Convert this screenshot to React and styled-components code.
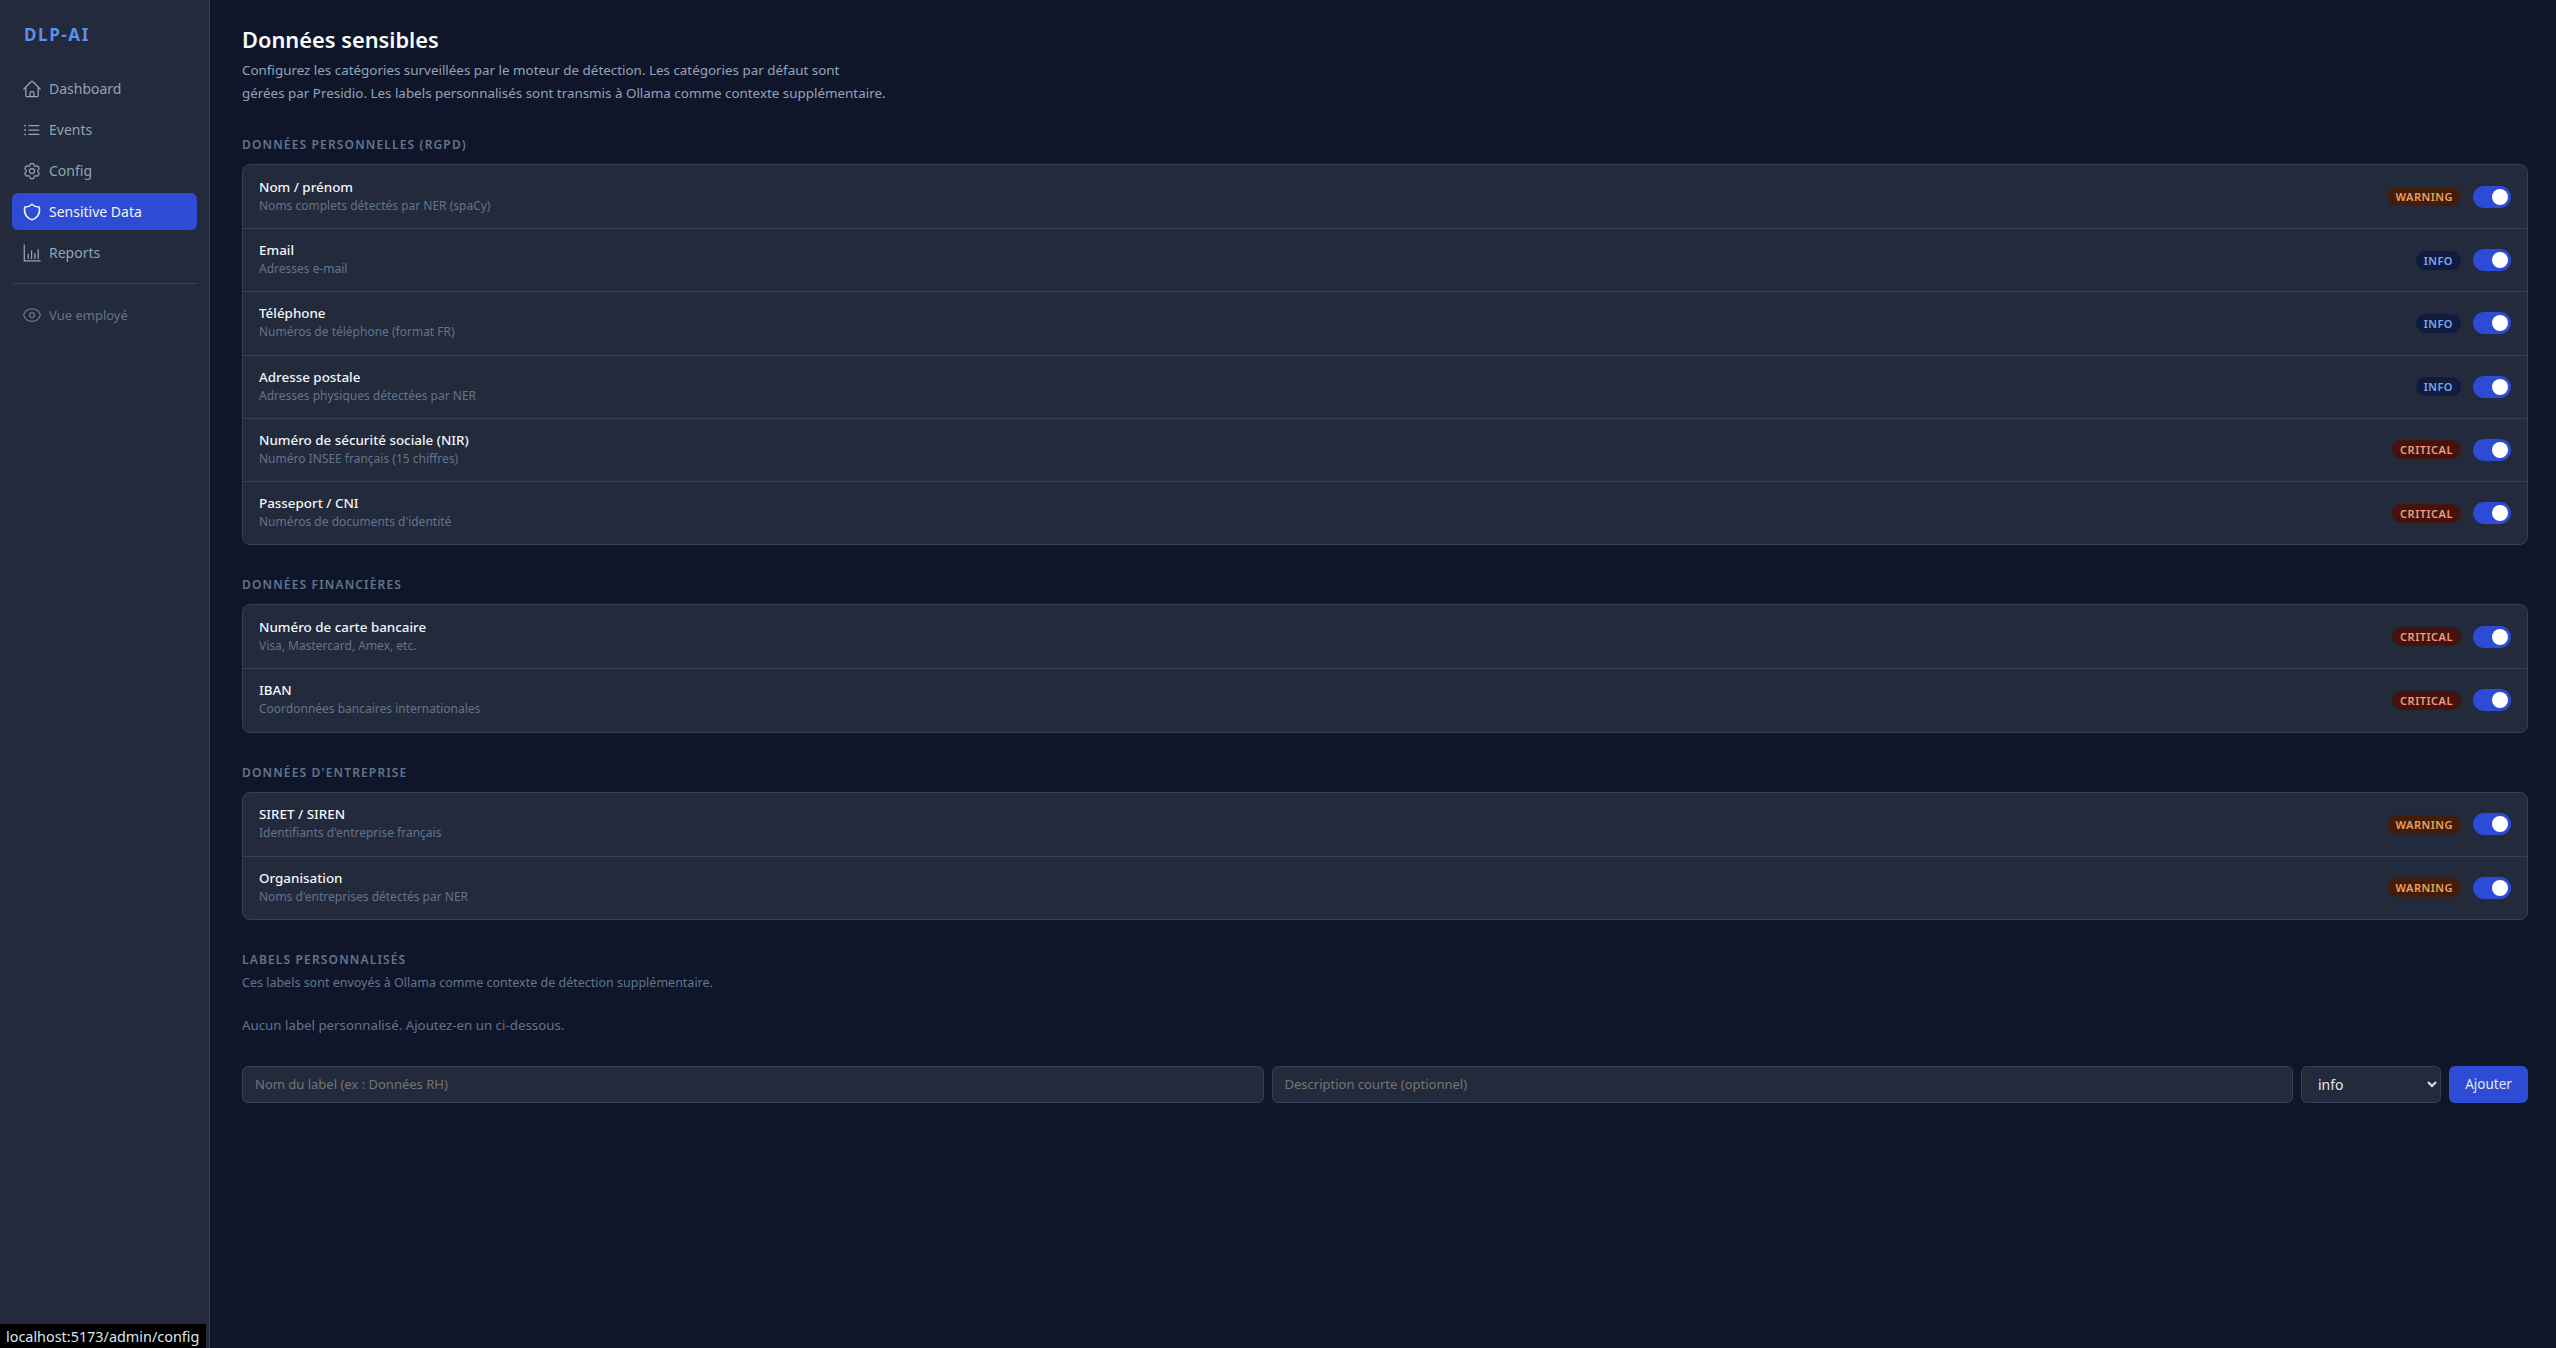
import React from "react";
import styled, { createGlobalStyle } from "styled-components";
import { HiOutlineHome, HiOutlineListBullet, HiOutlineCog6Tooth, HiOutlineEye } from "react-icons/hi2";

const GlobalStyle = createGlobalStyle`
  * { box-sizing: border-box; }
  html, body { margin: 0; padding: 0; background: #0f1629; }
  body { font-family: "Noto Sans", "Open Sans", sans-serif; color: #e2e8f0; }
`;

const Layout = styled.div`
  display: flex;
  min-height: 100vh;
`;

const Sidebar = styled.aside`
  width: 210px;
  flex-shrink: 0;
  background: #222a3b;
  border-right: 1px solid #334155;
  padding: 24px 12px;
`;

const Logo = styled.div`
  color: #5b90ec;
  font-size: 17px;
  font-weight: 700;
  letter-spacing: 1.6px;
  line-height: 22px;
  padding-left: 12px;
  margin-bottom: 24px;
`;

const Nav = styled.nav`
  display: flex;
  flex-direction: column;
  gap: 4px;
`;

const NavItem = styled.a`
  display: flex;
  align-items: center;
  gap: 7px;
  height: 37px;
  padding: 0 10px;
  border-radius: 6px;
  font-size: 14px;
  color: ${(p) => (p.$active ? "#f1f5f9" : "#94a3b8")};
  background: ${(p) => (p.$active ? "#2d4bd4" : "transparent")};
  svg {
    width: 20px;
    height: 20px;
    flex-shrink: 0;
  }
`;

const Divider = styled.div`
  height: 1px;
  background: #334155;
  margin: 12px 0;
`;

const EmployeeLink = styled(NavItem)`
  font-size: 13px;
  color: #64748b;
`;

const Main = styled.main`
  flex: 1;
  min-width: 0;
  padding: 24px 28px 24px 32px;
`;

const Title = styled.h1`
  margin: 0 0 3px;
  font-size: 21.8px;
  line-height: 32px;
  font-weight: 600;
  color: #f8fafc;
`;

const Intro = styled.p`
  margin: 0 0 31px;
  max-width: 660px;
  font-size: 13.4px;
  line-height: 23px;
  color: #94a3b8;
`;

const SectionTitle = styled.h2`
  margin: 0 0 10px;
  font-size: 12px;
  line-height: 18px;
  font-weight: 600;
  letter-spacing: 1.15px;
  text-transform: uppercase;
  color: #64748b;
`;

const Card = styled.div`
  background: #222a3b;
  border: 1px solid #334155;
  border-radius: 8px;
  margin-bottom: 31px;
`;

const Row = styled.div`
  display: flex;
  align-items: center;
  justify-content: space-between;
  height: 63.2px;
  padding: 0 16px;
  & + & { border-top: 1px solid #334155; }
`;

const RowText = styled.div`
  display: flex;
  flex-direction: column;
  padding-bottom: 2px;
`;

const RowName = styled.div`
  font-size: 13.4px;
  line-height: 20px;
  font-weight: 500;
  color: #f1f5f9;
`;

const RowDesc = styled.div`
  font-size: 12px;
  line-height: 18px;
  color: #64748b;
`;

const RowRight = styled.div`
  display: flex;
  align-items: center;
  gap: 12px;
`;

const badgeColors = {
  info: { bg: "#0f1c40", fg: "#7ba7e8" },
  warning: { bg: "#431d0b", fg: "#eda35f" },
  critical: { bg: "#43130c", fg: "#ef9a8a" },
};

const Badge = styled.span`
  display: inline-flex;
  align-items: center;
  height: 19px;
  padding: 0 8px;
  border-radius: 10px;
  font-size: 11px;
  font-weight: 600;
  letter-spacing: 0.5px;
  background: ${(p) => badgeColors[p.$level].bg};
  color: ${(p) => badgeColors[p.$level].fg};
`;

const Toggle = styled.span`
  display: flex;
  justify-content: flex-end;
  align-items: center;
  width: 38px;
  height: 22px;
  padding-right: 3px;
  border-radius: 11px;
  background: #2d4bd4;
  &::after {
    content: "";
    width: 16px;
    height: 16px;
    border-radius: 50%;
    background: #fff;
  }
`;

const LabelHint = styled.p`
  margin: -5px 0 0;
  font-size: 12.5px;
  line-height: 18px;
  color: #64748b;
`;

const EmptyText = styled.p`
  margin: 23px 0 31px;
  font-size: 13.3px;
  line-height: 20px;
  color: #64748b;
`;

const AddRow = styled.div`
  display: flex;
  gap: 8px;
`;

const fieldStyle = `
  height: 37px;
  background: #222a3b;
  border: 1px solid #334155;
  border-radius: 6px;
  font-family: inherit;
  font-size: 13px;
  color: #e2e8f0;
  outline: none;
`;

const Input = styled.input`
  ${fieldStyle}
  flex: 1;
  min-width: 0;
  padding: 0 12px;
  &::placeholder { color: #757575; }
`;

const Select = styled.select`
  ${fieldStyle}
  width: 140px;
  padding: 0 12px;
  font-size: 14px;
`;

const AddButton = styled.button`
  width: 79px;
  height: 37px;
  border: none;
  border-radius: 6px;
  background: #2d4bd4;
  color: #e2e8f0;
  font-family: inherit;
  font-size: 13.5px;
`;

const StatusTip = styled.div`
  position: fixed;
  left: 0;
  bottom: 0;
  height: 24px;
  padding: 0 7px 0 6px;
  display: flex;
  align-items: center;
  background: #000;
  color: #dbe4ee;
  font-size: 14.4px;
`;

const ShieldIcon = () => (
  <svg viewBox="0 0 24 24" fill="none" stroke="currentColor" strokeWidth="2" strokeLinecap="round" strokeLinejoin="round">
    <path d="M12 2.714A11.959 11.959 0 0 1 3.598 6 11.99 11.99 0 0 0 3 9.749c0 5.592 3.824 10.29 9 11.623 5.176-1.332 9-6.03 9-11.622 0-1.31-.21-2.571-.598-3.751h-.152c-3.196 0-6.1-1.248-8.25-3.285Z" />
  </svg>
);

const ChartIcon = () => (
  <svg viewBox="0 0 24 24" fill="none" stroke="currentColor" strokeWidth="1.5" strokeLinecap="round" strokeLinejoin="round">
    <path d="M2.75 2.5v19h19" />
    <path d="M7.5 18.5v-5M11.5 18.5v-9M15.5 18.5v-6M19.5 18.5V8" />
  </svg>
);

const personal = [
  ["Nom / prénom", "Noms complets détectés par NER (spaCy)", "warning"],
  ["Email", "Adresses e-mail", "info"],
  ["Téléphone", "Numéros de téléphone (format FR)", "info"],
  ["Adresse postale", "Adresses physiques détectées par NER", "info"],
  ["Numéro de sécurité sociale (NIR)", "Numéro INSEE français (15 chiffres)", "critical"],
  ["Passeport / CNI", "Numéros de documents d'identité", "critical"],
];

const financial = [
  ["Numéro de carte bancaire", "Visa, Mastercard, Amex, etc.", "critical"],
  ["IBAN", "Coordonnées bancaires internationales", "critical"],
];

const company = [
  ["SIRET / SIREN", "Identifiants d'entreprise français", "warning"],
  ["Organisation", "Noms d'entreprises détectés par NER", "warning"],
];

const CategoryCard = ({ rows }) => (
  <Card>
    {rows.map(([name, desc, level]) => (
      <Row key={name}>
        <RowText>
          <RowName>{name}</RowName>
          <RowDesc>{desc}</RowDesc>
        </RowText>
        <RowRight>
          <Badge $level={level}>{level.toUpperCase()}</Badge>
          <Toggle />
        </RowRight>
      </Row>
    ))}
  </Card>
);

export default function App() {
  return (
    <>
      <GlobalStyle />
      <Layout>
        <Sidebar>
          <Logo>DLP-AI</Logo>
          <Nav>
            <NavItem><HiOutlineHome />Dashboard</NavItem>
            <NavItem><HiOutlineListBullet />Events</NavItem>
            <NavItem><HiOutlineCog6Tooth />Config</NavItem>
            <NavItem $active><ShieldIcon />Sensitive Data</NavItem>
            <NavItem><ChartIcon />Reports</NavItem>
          </Nav>
          <Divider />
          <EmployeeLink><HiOutlineEye />Vue employé</EmployeeLink>
        </Sidebar>
        <Main>
          <Title>Données sensibles</Title>
          <Intro>
            Configurez les catégories surveillées par le moteur de détection. Les catégories par défaut sont<br />
            gérées par Presidio. Les labels personnalisés sont transmis à Ollama comme contexte supplémentaire.
          </Intro>
          <SectionTitle>Données personnelles (RGPD)</SectionTitle>
          <CategoryCard rows={personal} />
          <SectionTitle>Données financières</SectionTitle>
          <CategoryCard rows={financial} />
          <SectionTitle>Données d'entreprise</SectionTitle>
          <CategoryCard rows={company} />
          <SectionTitle>Labels personnalisés</SectionTitle>
          <LabelHint>Ces labels sont envoyés à Ollama comme contexte de détection supplémentaire.</LabelHint>
          <EmptyText>Aucun label personnalisé. Ajoutez-en un ci-dessous.</EmptyText>
          <AddRow>
            <Input placeholder="Nom du label (ex : Données RH)" />
            <Input placeholder="Description courte (optionnel)" />
            <Select defaultValue="info">
              <option value="info">info</option>
              <option value="warning">warning</option>
              <option value="critical">critical</option>
            </Select>
            <AddButton>Ajouter</AddButton>
          </AddRow>
        </Main>
      </Layout>
      <StatusTip>localhost:5173/admin/config</StatusTip>
    </>
  );
}
